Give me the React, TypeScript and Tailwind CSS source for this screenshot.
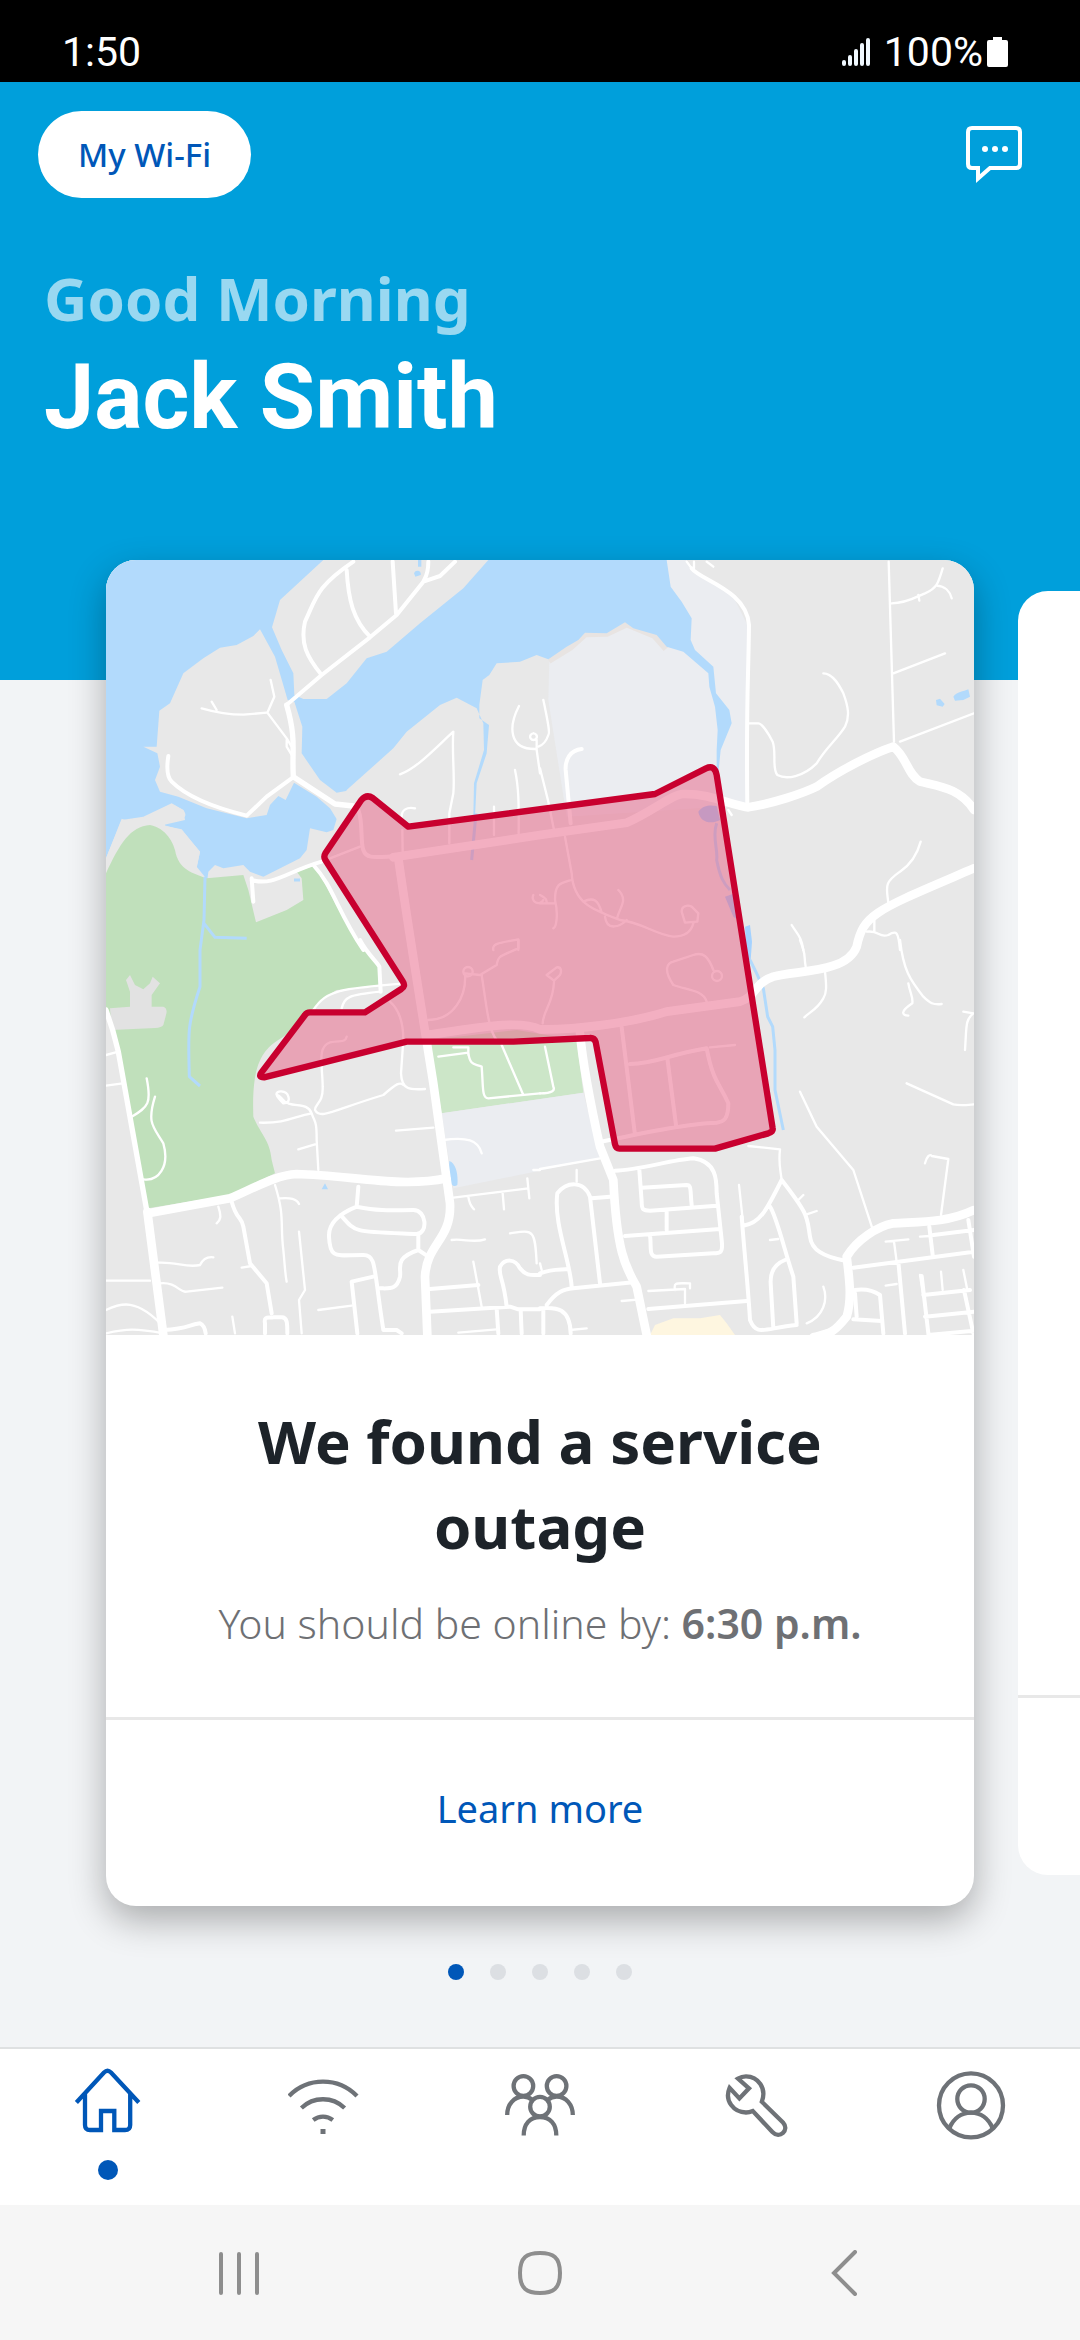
import type { ReactNode } from "react";

type Tile = {
  x: number;
  y: number;
  lanes: string;
  streets: string;
};

// street network, split into the four quarters of the map
const tiles: Tile[] = [
  {
    x: 0,
    y: 0,
    lanes:
      "M305 475C350 488 380 494 430 494L500 488M335 455L350 480M512 390L523 440 502 488 560 565 575 590M560 570V590L575 615M900 673C950 655 1000 600 1060 545C1055 600 1065 680 1060 730L1048 790V880M1257 468C1225 530 1225 600 1310 597M1310 570V600L1320 670M1300 550A10 10 0 1 0 1301 550M1245 660C1258 720 1256 780 1256 850M1182 770V855M905 800C905 780 920 770 945 775M907 840L908 910M690 925L780 890M1180 1200C1175 1180 1200 1178 1255 1168V1200M1300 1035A12 12 0 1 0 1330 1050",
    streets:
      "M760 35C650 110 650 140 615 215C600 280 620 320 665 375M740 60C745 150 760 210 810 260M878 35L888 190M985 35C985 80 970 90 970 95L890 195 810 262 665 375 563 462M970 95L1020 78 1065 35M205 618C200 650 200 680 215 695C250 730 310 765 440 797L500 740 582 680M455 985L460 1055M455 990C520 1010 560 965 665 935M640 945C700 1010 710 1080 790 1200M775 780C790 820 780 870 790 900C800 930 830 920 900 918",
  },
  {
    x: 1320,
    y: 0,
    lanes:
      "M440 35L455 55M462 35V55M500 35L520 50M1046 35L1062 575M1055 160C1100 160 1130 140 1155 130C1190 115 1195 100 1208 55M1190 107C1215 108 1230 125 1235 145M1135 135L1138 152M1060 370L1215 310M1080 575L1302 490M850 370C880 370 900 410 910 430C925 470 930 500 915 530C890 570 860 590 830 640C790 680 740 690 712 675C695 655 710 610 698 575C685 550 665 520 655 520H622M10 450C25 520 30 550 25 555C20 570 10 585 -5 590M0 655L25 755 42 840M75 860L95 970C100 1060 160 1080 240 1110C300 1115 350 1155 400 1160C440 1160 455 1140 460 1120M95 990C60 1000 45 1000 45 1050C55 1090 50 1130 40 1135M130 1055C160 1040 175 1050 185 1088M235 1020C265 1050 240 1070 232 1102M195 1100C200 1145 240 1130 260 1110M425 1085C425 1065 445 1065 455 1070L475 1090 472 1115 435 1118ZM0 1060H45M0 1035C20 1045 20 1050 20 1058M1142 875C1130 920 1110 945 1080 965C1030 1000 1040 1010 1045 1060M1003 1100V1145M980 1145C1020 1140 1015 1165 1045 1155C1070 1140 1075 1145 1080 1200M755 1125C770 1150 785 1160 790 1200M565 780L575 795",
    streets:
      "M455 55C480 90 620 120 627 225C625 400 618 450 622 770M125 597C90 600 75 630 77 660L92 820",
  },
  {
    x: 0,
    y: 1170,
    lanes:
      "M1015 350L1105 338C1110 380 1125 370 1145 380C1150 440 1145 475 1165 475L1320 460M1060 322H1105V345M1205 315L1270 465M1145 105C1160 200 1165 270 1190 300M1255 0V25C1200 50 1195 45 1190 75L1140 105 1095 100C1100 170 1060 240 985 240M1090 95A14 14 0 1 1 1118 95A14 14 0 1 1 1090 95M740 290C735 310 720 300 690 307C650 320 668 380 668 440C670 490 645 490 645 510C660 540 700 510 850 465C890 430 900 425 910 435M870 185C910 220 910 280 910 300L903 400C905 450 930 450 975 447M725 205C735 170 745 165 840 155M640 210C680 150 720 145 915 130M530 465C525 450 560 450 565 470C570 485 560 490 550 490C520 460 530 460 545 475C570 510 620 480 635 520M480 548C560 550 580 530 635 520C645 550 650 540 650 600L655 690M595 628L645 613M888 572L1000 563M1030 600C1100 590 1135 600 1145 640M18 437L68 430M18 345L55 335M140 415C155 490 145 500 95 530M165 470C140 550 160 560 190 610C210 680 175 725 130 718M355 800C365 830 362 840 350 850M525 735C555 830 540 850 550 930C555 980 555 1000 560 1025M540 775C570 773 590 775 597 792M597 875L615 1050 597 1080 605 1180M175 968C230 965 260 985 300 975C310 955 325 950 340 952M18 1022H150M180 1030C230 1025 240 1060 260 1055L367 1043M18 1110C60 1090 110 1070 195 1165M18 1180C80 1165 110 1165 190 1180M425 983L455 978M397 1130L405 1180M655 1110L755 1097M1060 773L1285 745M1105 770C1108 795 1115 800 1122 808M1208 760L1212 808M1282 715L1288 775M1055 900C1090 895 1120 910 1155 898M1230 880C1300 870 1305 865 1310 970M1120 965L1145 1100M1075 1178L1190 1168M1300 690H1320",
    streets:
      "M395 785C410 840 425 830 430 860L450 970 500 1030 515 1120M495 1180V1150C490 1125 510 1135 520 1132H545C562 1132 562 1150 562 1180M775 740L770 800C720 820 685 850 687 890C690 960 710 945 790 945C830 945 820 980 850 1170H890L905 1180M770 800C850 815 880 810 940 810C980 810 985 880 950 882C760 875 770 880 722 825M955 885V930L985 950M955 930C880 955 905 985 900 1010C890 1050 870 1045 840 1045M820 1010L755 1025 772 1180M990 1047L1135 1035M990 1115L1230 1100 1255 1108H1320M1220 1100C1210 1010 1195 1010 1200 980C1215 955 1245 955 1260 985C1280 1010 1295 1005 1320 1005M1190 1105L1195 1180M1262 1110L1265 1180M190 1170C270 1165 260 1155 300 1150C310 1155 315 1165 317 1180M780 0C800 40 835 70 838 80L842 155",
  },
  {
    x: 1320,
    y: 1170,
    lanes:
      "M8 250C10 210 40 190 42 125M20 105L50 82C65 80 65 95 60 105L42 122ZM500 185C490 150 440 150 400 135C370 90 380 70 400 65L460 45C490 35 505 50 520 90M516 108A15 15 0 1 1 546 108A15 15 0 1 1 516 108M510 322L585 315M0 460C40 460 45 450 40 440L15 320M0 687L180 655M110 690V725M780 0C800 50 790 40 797 80M855 95C860 140 860 160 850 175C830 210 810 215 793 232M1080 0C1090 90 1110 120 1150 170C1170 190 1180 195 1205 192M1105 130C1110 160 1120 170 1117 190C1080 215 1085 225 1105 227M1270 215L1300 220C1275 240 1280 260 1275 330M1100 430L1240 493C1260 498 1280 495 1302 493M780 455L830 560 940 690 997 865M1155 670C1160 650 1170 640 1175 648L1225 657 1203 825M625 618L720 628C715 670 720 680 725 720M775 780L790 765M800 823L830 813M597 735L610 857M690 900L715 897M850 1040C865 1080 850 1130 800 1150M1037 905L1105 898M1062 905L1070 965M1037 1037L1070 1032M1140 890L1170 888M1140 1005L1150 1070M1203 995L1208 1050M1270 990L1282 1050M405 1050C400 1025 410 1030 450 1030V1045M325 1053L435 1047V1090M245 1083L300 1078M90 1170L140 1165M0 970L5 990",
    streets:
      "M245 262L285 585M270 372C350 370 380 345 500 325C520 430 540 430 565 490C565 540 550 545 530 548C450 550 330 575 185 605M382 355L408 555M225 692C300 690 390 660 460 655C530 665 530 720 530 760L545 900C550 940 540 940 520 940L350 950C325 950 335 920 330 885M298 690L305 785C305 810 310 812 330 812L530 797M305 743L440 735C455 735 450 750 455 795M380 812V870M255 888L540 867M155 775L210 770M95 1040C90 960 40 850 52 760C80 725 130 720 150 770L180 1030M0 1000C40 985 60 990 85 987M20 1095C50 1055 70 1048 100 1045L280 1027M0 1105C50 1100 90 1105 92 1180M10 1105V1180M325 1107L620 1083M610 857C660 850 680 810 725 720C810 830 800 830 810 890C815 930 850 950 915 962M605 830C615 960 625 1050 630 1140C650 1190 670 1165 770 1155M690 800C710 830 730 920 760 1010L770 1150M735 960C710 970 690 990 692 1030L700 1165M940 983L1302 935M1168 860L1178 945M1180 885L1302 870M1075 965L1095 1180M945 1050C980 1045 1005 1055 1020 1065L1030 1180M945 1060L950 1130M940 1138L1025 1143M1150 1065L1290 1050M1155 1130L1302 1115M1145 1008L1165 1180M1285 840L1302 950M1272 1050L1300 1180M1165 1185L1302 1172",
  },
];

function ServiceMap() {
  return (
    <svg
      viewBox="18 30 2604 2325"
      className="block w-full"
      role="img"
      aria-label="Map of the outage area"
    >
      <rect x="18" y="30" width="2604" height="2325" fill="#e8e8e8" />
      {/* campus grounds */}
      <path
        d="M1700 30H1760L1780 60 1900 140 1945 230 1940 770H1860L1400 800 1345 450 1348 325 1450 245 1600 220Z"
        fill="#ebedf1"
      />
      <path d="M1345 330L1410 290 1455 250 1520 248 1580 220 1665 255 1700 295" fill="none" stroke="#e8e4e2" strokeWidth="24" />
      {/* sea, lake and the creek on the east side */}
      <path
        d="M18 30H1700L1712 110 1745 155 1775 205 1772 270 1785 300 1840 350 1848 430 1888 480 1895 520 1862 600 1855 670H1850L1850 600 1853 540 1845 470 1828 410 1825 370 1750 305 1700 290 1670 255 1600 235 1575 217 1520 250 1455 248 1435 270 1400 290 1345 328 1310 315 1260 335 1190 340 1168 375 1148 390 1138 465 1138 505 1167 525 1160 610 1130 700 1125 800H1120L1122 700 1152 600 1150 520 1130 475 1070 443 1020 465 920 545 880 595 740 720 712 800 700 840 680 847 630 835 620 900 600 925 490 980 450 965 430 945 370 955 345 945 325 965 322 990 318 985 290 950 300 905 245 840 190 825 255 810 250 780 215 760 130 800 65 810 18 925Z"
        fill="#b2dafc"
      />
      <path
        d="M670 30L540 150 516 232 545 300 580 370 583 435 610 447 680 447 740 400 800 325 860 305 960 220 1090 115 1165 30Z"
        fill="#e8e8e8"
      />
      <path
        d="M480 238L460 258 410 285 360 293 310 325 250 370 210 460 178 482 170 590 130 590 172 610 180 650 165 690 180 725 235 740 320 775 440 805 500 795 510 765 535 738 557 750 582 698 650 740 690 775 715 815 775 780 742 722 710 728 660 690 605 610 607 530 583 455 563 450 525 320Z"
        fill="#e8e8e8"
      />
      <path d="M65 806C100 820 150 800 215 762L250 780C265 800 255 812 195 818V828L245 838 300 905 290 955 18 980V925Z" fill="#e8e8e8" />
      {/* parks */}
      <path
        d="M18 970C60 880 90 830 150 825C200 835 220 880 225 900C235 960 280 970 320 985L430 975 445 1020 468 1117 560 1080 610 1050 605 985 590 965 640 948C690 1010 700 1080 795 1190L840 1250V1310L710 1320C660 1350 650 1370 640 1385L550 1460C480 1500 455 1550 460 1700C480 1750 510 1770 515 1830L525 1870 390 1935 145 1975 55 1505 18 1370Z"
        fill="#c0e0bb"
      />
      <path d="M30 1375L90 1370V1325L78 1290 90 1275 105 1305 130 1318 150 1300 158 1280 180 1300 155 1335 155 1370H190Q204 1375 198 1395L190 1425Q185 1433 165 1434L35 1440Z" fill="#e2e2e2" />
      <path d="M315 980L312 1110 300 1200V1310C260 1430 265 1450 268 1580L300 1608M312 1120L345 1162 440 1165M582 990H600" fill="none" stroke="#b2dafc" strokeWidth="9" />
      <path d="M988 1470L1250 1440 1430 1470 1450 1628 1025 1690Z" fill="#cce6c8" />
      <path d="M1025 1690L1450 1628 1500 1825 1060 1915Z" fill="#ebedf1" />
      {/* ponds */}
      <path d="M1048 1833C1070 1840 1075 1880 1072 1905C1060 1915 1050 1900 1046 1880ZM665 1918L675 1900 684 1918ZM2508 450L2520 446 2534 462 2528 470 2510 466ZM2560 440C2570 425 2590 425 2605 418L2610 440 2590 450 2565 452ZM942 70A10 10 0 1 1 962 75L946 80ZM954 30H964V50H954Z" fill="#b2dafc" />
      <path d="M1795 785C1810 765 1830 765 1850 768L1860 810C1830 825 1800 815 1795 785ZM1875 1040L1905 1030 1915 1110 1900 1100ZM1935 1130L1950 1125 1956 1175 1952 1230 1940 1230Z" fill="#a4d2ff" />
      <path d="M1115 930L1128 790M1850 820C1835 860 1855 900 1850 930C1860 980 1870 1000 1890 1020M1950 1230L1970 1270 1990 1315 2003 1400 2018 1430 2025 1500V1620L2050 1740" fill="none" stroke="#b2dafc" strokeWidth="9" />
      <path d="M1650 2355L1665 2325 1720 2305 1800 2305 1860 2295 1880 2320 1905 2355Z" fill="#fef6e0" />

      <g fill="none" stroke="#fff" strokeLinecap="round" strokeLinejoin="round">
        {tiles.map((t) => (
          <g key={`${t.x}-${t.y}`} transform={`translate(${t.x} ${t.y})`}>
            <path d={t.lanes} strokeWidth="7" />
            <path d={t.streets} strokeWidth="12" />
          </g>
        ))}
        {/* avenues */}
        <path d="M560 465C590 570 575 600 580 680L705 762 760 768M18 1380L38 1440 55 1505 140 1980" strokeWidth="16" />
        <path
          d="M880 922C1000 905 1150 880 1320 855L1580 818C1650 790 1720 730 1750 732C1830 730 1890 765 1945 772C2020 760 2110 730 2150 710C2220 660 2320 610 2380 590C2420 620 2420 670 2460 695C2520 710 2580 715 2622 780M895 925C915 1070 960 1350 1000 1600L1050 1960C1055 2070 980 2080 975 2180L982 2355M980 1455C1100 1440 1250 1405 1320 1438C1420 1440 1590 1420 1700 1385L1920 1355C1970 1340 1960 1300 2020 1280C2090 1260 2240 1270 2270 1190C2290 1090 2330 1080 2622 955M1440 1450C1450 1560 1480 1700 1500 1790L1540 1890C1550 2100 1575 2150 1610 2210L1640 2355M145 1990L390 1945C470 1910 530 1875 590 1872C750 1875 900 1915 1040 1885M142 1985L190 2355M2622 1980C2540 2020 2450 2015 2380 2020C2330 2030 2270 2070 2240 2120C2250 2200 2255 2250 2240 2300C2200 2350 2190 2350 2140 2362"
          strokeWidth="26"
        />
      </g>

      {/* outage area */}
      <path
        d="M784 750Q800 732 818 744L925 830 1665 732 1818 655Q1844 643 1850 675L2018 1735Q2020 1745 2005 1750L1845 1796H1558Q1548 1796 1545 1783L1487 1476Q1483 1463 1470 1464L1240 1475H920L492 1582Q474 1582 484 1568L615 1395Q620 1387 630 1387H795L904 1317Q918 1309 908 1294L676 930Q670 920 676 910Z"
        fill="#e86084"
        fillOpacity="0.5"
        stroke="#c8002f"
        strokeWidth="19"
        strokeLinejoin="round"
      />
    </svg>
  );
}

function StatusBar() {
  return (
    <div className="flex h-[82px] items-end justify-between bg-black pr-[72px] pb-[7px] pl-[62px] font-['Roboto',sans-serif] text-[41px] leading-[46px] text-white">
      <span>1:50</span>
      <div className="flex items-center">
        <svg width="28" height="30" viewBox="0 0 28 30" className="mr-3.5" stroke="#f0f8ff" strokeWidth="4" strokeLinecap="round" aria-hidden="true">
          <path d="M2 25v2M8 20v7M14 14v13M20 8v19M26 3v24" />
        </svg>
        <span>100%</span>
        <svg width="21" height="30" viewBox="0 0 21 30" className="ml-1" fill="#fff" aria-hidden="true">
          <path d="M6 0h9v3h4q2 0 2 2v23q0 2-2 2H2q-2 0-2-2V5q0-2 2-2h4Z" />
        </svg>
      </div>
    </div>
  );
}

type Tab = {
  label: string;
  active?: boolean;
  icon: ReactNode;
};

const tabs: Tab[] = [
  {
    label: "Home",
    active: true,
    icon: (
      <path d="M4.4 34.5L32 4.5Q35.5 1 39 4.5L66.8 34.5M13 25.5V57Q13 62 18 62H29V43H42.3V62H53Q58.2 62 58.2 57V25.5" />
    ),
  },
  {
    label: "Wi-Fi",
    icon: (
      <>
        <path d="M1 28A47.3 47.3 0 0 1 69 28M13.4 40A31 31 0 0 1 56.6 40M25.2 52A16 16 0 0 1 44.8 52" />
        <path d="M32.5 63.5H37.5" strokeWidth="5" />
      </>
    ),
  },
  {
    label: "People",
    icon: (
      <>
        <circle cx="19.4" cy="18" r="9.8" />
        <circle cx="52.6" cy="18" r="9.8" />
        <circle cx="36" cy="38.7" r="9.8" />
        <path d="M3.2 47C3.2 36.5 10 28.5 19.4 28.5Q24 28.5 28.5 32M68.8 47C68.8 36.5 62 28.5 52.6 28.5Q48 28.5 43.5 32M19.7 67.5C19.7 56 26 49 36 49S52.3 56 52.3 67.5" />
      </>
    ),
  },
  {
    label: "Tools",
    icon: (
      <path d="M18 10.5C20.5 9 23 8.3 26 8.3C38 8.5 47 20 41.8 33.7L63 54.5C70 62 59.5 71.5 52.4 64L32.8 43C30.5 44 28.5 44.5 26 44.5C14 44.5 4 33 9.6 19.8L19.4 30.4L29 20.3Z" />
    ),
  },
  {
    label: "Profile",
    icon: (
      <>
        <circle cx="35" cy="37.4" r="32" />
        <circle cx="35" cy="31" r="13.7" />
        <path d="M13.5 60C17.5 50.5 25.5 44.6 35 44.6S52.5 50.5 56.5 60" />
      </>
    ),
  },
];

export default function App() {
  return (
    <div className="flex min-h-screen flex-col bg-[#f2f4f6] font-['Noto_Sans',sans-serif]">
      <StatusBar />
      <header className="bg-[#009fdb] pb-[230px]">
        <div className="flex items-center justify-between pt-[29px] pr-[58px] pl-[38px]">
          <button className="rounded-full bg-white px-10 py-5 text-[33px] leading-[47px] font-medium text-[#0057b8]">
            My Wi-Fi
          </button>
          <button aria-label="Chat">
            <svg width="56" height="58" viewBox="0 0 56 58" fill="none" stroke="#fff" strokeWidth="4" aria-hidden="true">
              <path d="M6 2H50Q54 2 54 6V38Q54 42 50 42H24L12 52.5V42H6Q2 42 2 38V6Q2 2 6 2Z" />
              <g fill="#fff" stroke="none">
                <circle cx="19" cy="23" r="3" />
                <circle cx="29" cy="23" r="3" />
                <circle cx="39" cy="23" r="3" />
              </g>
            </svg>
          </button>
        </div>
        <div className="px-11 pt-[60px]">
          <p className="text-[60px] leading-[80px] font-bold text-white/60">
            Good Morning
          </p>
          <h1 className="mt-2 font-['Roboto',sans-serif] text-[90px] leading-[104px] font-bold text-white">
            Jack Smith
          </h1>
        </div>
      </header>

      <main className="-mt-[120px]">
        <div className="flex overflow-x-clip">
          <article className="relative ml-[106px] w-[calc(100%-212px)] shrink-0 rounded-[30px] bg-white shadow-[0_14px_36px_rgba(0,0,0,0.3)]">
            <div className="overflow-hidden rounded-t-[30px]">
              <ServiceMap />
            </div>
            <div className="px-24 pt-16 pb-14 text-center">
              <h2 className="text-[60px] leading-[85px] font-bold text-[#1d2329]">
                We found a service outage
              </h2>
              <p className="mt-4 text-[41px] leading-[76px] font-light text-[#6e7074]">
                You should be online by:{" "}
                <strong className="font-semibold">6:30 p.m.</strong>
              </p>
            </div>
            <div className="border-t-[3px] border-[#e8e8e8] pt-[60px] pb-[70px] text-center">
              <a href="#outage" className="text-[38px] leading-[56px] text-[#0057b8]">
                Learn more
              </a>
            </div>
          </article>
          <article className="my-[31px] ml-11 flex w-[calc(100%-212px)] shrink-0 flex-col justify-end rounded-[30px] bg-white">
            <div className="h-[180px] border-t-[3px] border-[#e8e8e8]" />
          </article>
        </div>
        <div className="flex justify-center gap-[26px] pt-[58px]">
          {[0, 1, 2, 3, 4].map((i) => (
            <button
              key={i}
              aria-label={`Card ${i + 1}`}
              className={`size-4 rounded-full ${i === 0 ? "bg-[#0057b8]" : "bg-[#dcdfe3]"}`}
            />
          ))}
        </div>
      </main>

      <footer className="mt-auto">
        <nav className="flex h-[158px] border-t-2 border-[#dfe1e2] bg-white pt-[19px]">
          {tabs.map((tab) => (
            <button
              key={tab.label}
              aria-label={tab.label}
              className={`flex flex-1 flex-col items-center gap-5 ${tab.active ? "text-[#0057b8]" : "text-[#6e7277]"}`}
            >
              <svg width="72" height="72" viewBox="0 0 72 72" fill="none" stroke="currentColor" strokeWidth="4.3" aria-hidden="true">
                {tab.icon}
              </svg>
              {tab.active && <span className="size-5 rounded-full bg-current" />}
            </button>
          ))}
        </nav>
        <div className="flex h-[135px] items-center justify-around bg-[#f6f6f6] px-[88px] text-[#8e8e8e]">
          <button aria-label="Recent apps">
            <svg width="46" height="46" viewBox="0 0 46 46" stroke="currentColor" strokeWidth="4" strokeLinecap="round" aria-hidden="true">
              <path d="M5 4v39M23 4v39M41 4v39" />
            </svg>
          </button>
          <button aria-label="Home screen">
            <svg width="46" height="46" viewBox="0 0 46 46" fill="none" stroke="currentColor" strokeWidth="4" aria-hidden="true">
              <path d="M23 3C36 3 43 7 43 23S36 43 23 43 3 39 3 23 10 3 23 3Z" />
            </svg>
          </button>
          <button aria-label="Back">
            <svg width="46" height="46" viewBox="0 0 46 46" fill="none" stroke="currentColor" strokeWidth="4" strokeLinecap="round" aria-hidden="true">
              <path d="M37 2L16 23 37 44" />
            </svg>
          </button>
        </div>
      </footer>
    </div>
  );
}
